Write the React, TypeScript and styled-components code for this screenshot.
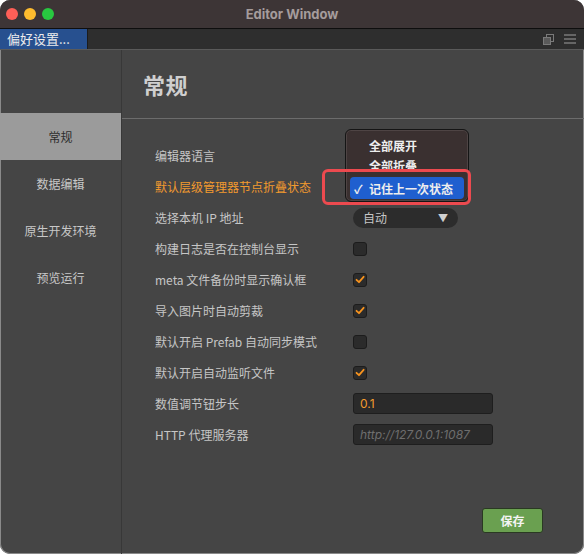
import styled, { createGlobalStyle } from 'styled-components';

const GlobalStyle = createGlobalStyle`
  html, body {
    margin: 0;
    padding: 0;
    background: #ffffff;
  }
  body {
    font-family: "Noto Sans CJK SC", "Noto Sans", "Liberation Sans", sans-serif;
  }
`;

const Window = styled.div`
  width: 584px;
  height: 554px;
  border-radius: 10px;
  overflow: hidden;
  display: flex;
  flex-direction: column;
  background: #454545;
  box-shadow: inset 0 0 0 1px #8a8a8a;
`;

const TitleBar = styled.div`
  height: 28px;
  flex: none;
  background: #3d3536;
  border-bottom: 1px solid #0e0e0e;
  display: flex;
  align-items: center;
  position: relative;
  padding-left: 6px;
  gap: 6px;
  h1 {
    position: absolute;
    left: 0;
    right: 0;
    margin: 0;
    text-align: center;
    font-family: "Inter", "Liberation Sans", sans-serif;
    font-size: 13px;
    font-weight: 700;
    color: #a59c9c;
    pointer-events: none;
  }
`;

const Light = styled.span<{ $color: string }>`
  width: 12px;
  height: 12px;
  border-radius: 50%;
  background: ${(p) => p.$color};
`;

const TabBar = styled.div`
  height: 20px;
  flex: none;
  background: #2e2e2e;
  border-bottom: 1px solid #5a5a5a;
  display: flex;
  align-items: stretch;
`;

const Tab = styled.div`
  width: 88px;
  background: #27508f;
  color: #ececec;
  font-size: 13px;
  line-height: 20px;
  padding-left: 7px;
  box-sizing: border-box;
  border-right: 1px solid #1c1c1c;
  white-space: nowrap;
`;

const TabTools = styled.div`
  margin-left: auto;
  display: flex;
  align-items: center;
  gap: 10px;
  padding-right: 8px;
  color: #7a7a7a;
`;

const Body = styled.div`
  flex: 1;
  display: flex;
  min-height: 0;
`;

const Sidebar = styled.nav`
  width: 122px;
  flex: none;
  border-right: 1px solid #383838;
  padding-top: 63px;
  box-sizing: border-box;
`;

const NavItem = styled.div<{ $active?: boolean }>`
  height: 47px;
  display: flex;
  align-items: center;
  justify-content: center;
  font-size: 12px;
  color: ${(p) => (p.$active ? '#2e2e2e' : '#c8c8c8')};
  background: ${(p) => (p.$active ? '#9b9b9b' : 'transparent')};
`;

const Main = styled.main`
  flex: 1;
  display: flex;
  flex-direction: column;
  position: relative;
`;

const Header = styled.div`
  height: 68px;
  flex: none;
  border-bottom: 1px solid #6c6c6c;
  display: flex;
  align-items: center;
  padding-left: 21px;
  h2 {
    margin: 0;
    font-size: 22px;
    font-weight: 700;
    color: #cfcfcf;
    letter-spacing: 0.5px;
  }
`;

const List = styled.div`
  flex: 1;
  padding: 21px 0 0 33px;
  position: relative;
`;

const Row = styled.div`
  height: 31px;
  display: grid;
  grid-template-columns: 198px auto;
  align-items: center;
`;

const Label = styled.span<{ $highlight?: boolean }>`
  font-size: 12px;
  color: ${(p) => (p.$highlight ? '#f29a2e' : '#c6c6c6')};
  white-space: nowrap;
`;

const Check = styled.span`
  width: 14px;
  height: 14px;
  box-sizing: border-box;
  border-radius: 3px;
  background: #2b2b2b;
  border: 1px solid #1c1c1c;
  display: flex;
  align-items: center;
  justify-content: center;
`;

const Select = styled.div`
  width: 105px;
  height: 20px;
  border-radius: 10px;
  background: #2c2c2c;
  display: flex;
  align-items: center;
  justify-content: space-between;
  padding: 0 10px;
  box-sizing: border-box;
  font-size: 12px;
  color: #c6c6c6;
  span:last-child {
    font-size: 10px;
    color: #d0d0d0;
  }
`;

const Input = styled.div<{ $placeholder?: boolean }>`
  width: 140px;
  height: 21px;
  box-sizing: border-box;
  border-radius: 3px;
  background: #2a2a2a;
  border: 1px solid #1e1e1e;
  padding-left: 6px;
  display: flex;
  align-items: center;
  font-family: "Inter", "Liberation Sans", sans-serif;
  font-size: 12px;
  font-style: ${(p) => (p.$placeholder ? 'italic' : 'normal')};
  color: ${(p) => (p.$placeholder ? '#6e6e6e' : '#f29a2e')};
`;

const Menu = styled.div`
  position: absolute;
  left: 223px;
  top: 10px;
  width: 124px;
  height: 73px;
  box-sizing: border-box;
  border-radius: 6px;
  background: #3a3030;
  border: 1px solid #151515;
  box-shadow: inset 0 0 0 1px #4e4444;
  padding: 5px 4px;
`;

const MenuItem = styled.div<{ $selected?: boolean }>`
  height: ${(p) => (p.$selected ? '22px' : '20px')};
  margin-top: ${(p) => (p.$selected ? '2px' : '0')};
  border-radius: 4px;
  display: flex;
  align-items: center;
  padding-left: 19px;
  position: relative;
  font-size: 12px;
  font-weight: 700;
  color: #ededed;
  background: ${(p) => (p.$selected ? '#1f5fcf' : 'transparent')};
  i {
    position: absolute;
    left: 4px;
    font-style: normal;
    font-weight: 700;
  }
`;

const Highlight = styled.div`
  position: absolute;
  left: 200px;
  top: 50px;
  width: 149px;
  height: 36px;
  box-sizing: border-box;
  border: 3px solid #ec4a4f;
  border-radius: 6px;
`;

const Footer = styled.div`
  display: flex;
  justify-content: flex-end;
  padding: 0 41px 21px 0;
`;

const SaveButton = styled.button`
  width: 61px;
  height: 25px;
  border-radius: 3px;
  background: #6aa050;
  border: 1px solid #2a3922;
  color: #f4f4f4;
  font-family: "Noto Sans CJK SC", sans-serif;
  font-size: 12px;
  font-weight: 700;
  padding: 0;
`;

const CheckMark = () => (
  <svg width="10" height="9" viewBox="0 0 10 9">
    <path d="M1.5 4.8 L4 7.2 L8.6 1.8" fill="none" stroke="#f7931e" strokeWidth="1.8" strokeLinecap="round" strokeLinejoin="round" />
  </svg>
);

type Item =
  | { label: string; kind: 'check'; checked: boolean }
  | { label: string; kind: 'select'; value: string }
  | { label: string; kind: 'input'; value: string; placeholder?: boolean }
  | { label: string; kind: 'none'; highlight?: boolean };

const items: Item[] = [
  { label: '编辑器语言', kind: 'none' },
  { label: '默认层级管理器节点折叠状态', kind: 'none', highlight: true },
  { label: '选择本机 IP 地址', kind: 'select', value: '自动' },
  { label: '构建日志是否在控制台显示', kind: 'check', checked: false },
  { label: 'meta 文件备份时显示确认框', kind: 'check', checked: true },
  { label: '导入图片时自动剪裁', kind: 'check', checked: true },
  { label: '默认开启 Prefab 自动同步模式', kind: 'check', checked: false },
  { label: '默认开启自动监听文件', kind: 'check', checked: true },
  { label: '数值调节钮步长', kind: 'input', value: '0.1' },
  { label: 'HTTP 代理服务器', kind: 'input', value: 'http://127.0.0.1:1087', placeholder: true },
];

function Control({ item }: { item: Item }) {
  if (item.kind === 'check') return <Check>{item.checked && <CheckMark />}</Check>;
  if (item.kind === 'select')
    return (
      <Select>
        <span>{item.value}</span>
        <span>▼</span>
      </Select>
    );
  if (item.kind === 'input') return <Input $placeholder={item.placeholder}>{item.value}</Input>;
  return <span />;
}

export default function App() {
  return (
    <>
      <GlobalStyle />
      <Window>
        <TitleBar>
          <Light $color="#fe5f57" />
          <Light $color="#febc2e" />
          <Light $color="#28c840" />
          <h1>Editor Window</h1>
        </TitleBar>
        <TabBar>
          <Tab>偏好设置...</Tab>
          <TabTools>
            <svg width="11" height="11" viewBox="0 0 11 11">
              <rect x="3.5" y="0.5" width="7" height="7" fill="none" stroke="currentColor" />
              <rect x="0.5" y="3.5" width="7" height="7" fill="#5a5a5a" stroke="currentColor" />
            </svg>
            <svg width="12" height="10" viewBox="0 0 12 10">
              <path d="M0 1h12M0 5h12M0 9h12" stroke="currentColor" strokeWidth="1.4" />
            </svg>
          </TabTools>
        </TabBar>
        <Body>
          <Sidebar>
            <NavItem $active>常规</NavItem>
            <NavItem>数据编辑</NavItem>
            <NavItem>原生开发环境</NavItem>
            <NavItem>预览运行</NavItem>
          </Sidebar>
          <Main>
            <Header>
              <h2>常规</h2>
            </Header>
            <List>
              {items.map((item) => (
                <Row key={item.label}>
                  <Label $highlight={item.kind === 'none' && item.highlight}>{item.label}</Label>
                  <Control item={item} />
                </Row>
              ))}
              <Menu>
                <MenuItem>全部展开</MenuItem>
                <MenuItem>全部折叠</MenuItem>
                <MenuItem $selected>
                  <i>✓</i>记住上一次状态
                </MenuItem>
              </Menu>
              <Highlight />
            </List>
            <Footer>
              <SaveButton>保存</SaveButton>
            </Footer>
          </Main>
        </Body>
      </Window>
    </>
  );
}
